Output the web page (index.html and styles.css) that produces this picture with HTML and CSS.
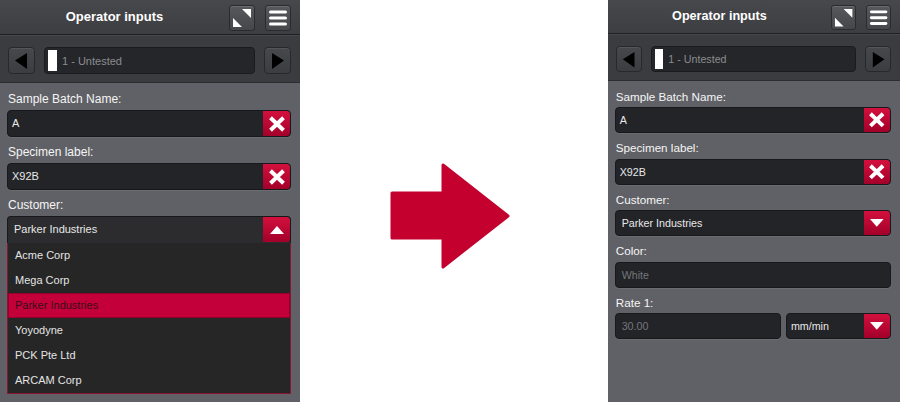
FILE: index.html
```html
<!DOCTYPE html>
<html lang="en">
<head>
<meta charset="utf-8">
<title>Operator inputs</title>
<link rel="stylesheet" href="styles.css">
</head>
<body>
<div class="page">
  <section class="panel">
    <header class="bar">
      <h1 class="title">Operator inputs</h1>
      <div class="bar-actions">
        <button class="tool-btn" aria-label="Expand"><svg viewBox="0 0 24 24"><polygon points="12,3 21,3 21,12" fill="#fff"/><polygon points="3,12 3,21 12,21" fill="#fff"/></svg></button>
        <button class="tool-btn" aria-label="Menu"><svg viewBox="0 0 24 24"><rect x="3" y="4.5" width="18" height="3" rx="1.5" fill="#fff"/><rect x="3" y="10.5" width="18" height="3" rx="1.5" fill="#fff"/><rect x="3" y="16.5" width="18" height="3" rx="1.5" fill="#fff"/></svg></button>
      </div>
    </header>
    <nav class="stepper">
      <button class="step-btn" aria-label="Previous"><svg viewBox="0 0 25 25"><polygon points="6,12.5 18,5 18,21" fill="#000"/></svg></button>
      <div class="step-field"><span class="swatch"></span><span class="step-text">1 - Untested</span></div>
      <button class="step-btn" aria-label="Next"><svg viewBox="0 0 25 25"><polygon points="19,12.5 7,5 7,21" fill="#000"/></svg></button>
    </nav>
    <div class="form">
      <div class="field">
        <label class="field-label">Sample Batch Name:</label>
        <div class="input"><span class="input-text">A</span><span class="red-btn"><svg class="icon-x" viewBox="0 0 18 16"><path d="M2.5 1.8L15.5 14.2M15.5 1.8L2.5 14.2" stroke="#fff" stroke-width="4"/></svg></span></div>
      </div>
      <div class="field">
        <label class="field-label">Specimen label:</label>
        <div class="input"><span class="input-text">X92B</span><span class="red-btn"><svg class="icon-x" viewBox="0 0 18 16"><path d="M2.5 1.8L15.5 14.2M15.5 1.8L2.5 14.2" stroke="#fff" stroke-width="4"/></svg></span></div>
      </div>
      <div class="field">
        <label class="field-label">Customer:</label>
        <div class="input select is-open"><span class="input-text select-text">Parker Industries</span><span class="red-btn"><svg class="icon-tri" viewBox="0 0 14 8"><polygon points="0,8 7,0 14,8" fill="#fff"/></svg></span></div>
        <ul class="options">
          <li class="option">Acme Corp</li>
          <li class="option">Mega Corp</li>
          <li class="option is-selected">Parker Industries</li>
          <li class="option">Yoyodyne</li>
          <li class="option">PCK Pte Ltd</li>
          <li class="option">ARCAM Corp</li>
        </ul>
      </div>
    </div>
  </section>

  <div class="divider">
    <svg class="big-arrow" viewBox="0 0 120 106" width="120" height="106"><polygon points="2,30 53,30 53,2 118,53 53,104 53,75 2,75" fill="#c4002e" stroke="#c4002e" stroke-width="3" stroke-linejoin="round"/></svg>
  </div>

  <section class="panel panel--compact">
    <header class="bar">
      <h1 class="title">Operator inputs</h1>
      <div class="bar-actions">
        <button class="tool-btn" aria-label="Expand"><svg viewBox="0 0 24 24"><polygon points="12,3 21,3 21,12" fill="#fff"/><polygon points="3,12 3,21 12,21" fill="#fff"/></svg></button>
        <button class="tool-btn" aria-label="Menu"><svg viewBox="0 0 24 24"><rect x="3" y="4.5" width="18" height="3" rx="1.5" fill="#fff"/><rect x="3" y="10.5" width="18" height="3" rx="1.5" fill="#fff"/><rect x="3" y="16.5" width="18" height="3" rx="1.5" fill="#fff"/></svg></button>
      </div>
    </header>
    <nav class="stepper">
      <button class="step-btn" aria-label="Previous"><svg viewBox="0 0 25 25"><polygon points="6,12.5 18,5 18,21" fill="#000"/></svg></button>
      <div class="step-field"><span class="swatch"></span><span class="step-text">1 - Untested</span></div>
      <button class="step-btn" aria-label="Next"><svg viewBox="0 0 25 25"><polygon points="19,12.5 7,5 7,21" fill="#000"/></svg></button>
    </nav>
    <div class="form">
      <div class="field">
        <label class="field-label">Sample Batch Name:</label>
        <div class="input"><span class="input-text">A</span><span class="red-btn"><svg class="icon-x" viewBox="0 0 18 16"><path d="M2.5 1.8L15.5 14.2M15.5 1.8L2.5 14.2" stroke="#fff" stroke-width="4"/></svg></span></div>
      </div>
      <div class="field">
        <label class="field-label">Specimen label:</label>
        <div class="input"><span class="input-text">X92B</span><span class="red-btn"><svg class="icon-x" viewBox="0 0 18 16"><path d="M2.5 1.8L15.5 14.2M15.5 1.8L2.5 14.2" stroke="#fff" stroke-width="4"/></svg></span></div>
      </div>
      <div class="field">
        <label class="field-label">Customer:</label>
        <div class="input select"><span class="input-text select-text">Parker Industries</span><span class="red-btn"><svg class="icon-tri" viewBox="0 0 14 8"><polygon points="0,0 14,0 7,8" fill="#fff"/></svg></span></div>
      </div>
      <div class="field">
        <label class="field-label">Color:</label>
        <div class="input"><span class="input-text placeholder">White</span></div>
      </div>
      <div class="field">
        <label class="field-label">Rate 1:</label>
        <div class="rate-row">
          <div class="input"><span class="input-text placeholder">30.00</span></div>
          <div class="input select"><span class="input-text">mm/min</span><span class="red-btn"><svg class="icon-tri" viewBox="0 0 14 8"><polygon points="0,0 14,0 7,8" fill="#fff"/></svg></span></div>
        </div>
      </div>
    </div>
  </section>
</div>
</body>
</html>
```

FILE: styles.css
```css
* {
  box-sizing: border-box;
  margin: 0;
  padding: 0;
}

html,
body {
  width: 900px;
  height: 402px;
  overflow: hidden;
  background: #ffffff;
}

body {
  font-family: "Liberation Sans", Arial, sans-serif;
}

.page {
  display: flex;
  height: 402px;
  overflow: hidden;
}

.panel {
  flex: none;
  width: 300px;
  height: 402px;
  background: #606166;
  display: flex;
  flex-direction: column;
}

.panel--compact {
  zoom: 0.973;
  height: 414px;
}

/* header bar */
.bar {
  height: 35px;
  flex: none;
  display: flex;
  align-items: flex-start;
  padding: 5px 9px 0 0;
  background: linear-gradient(#47484c, #3d3e42);
  border-bottom: 1px solid #1f2023;
}

.title {
  flex: 1;
  text-align: center;
  font-size: 13px;
  font-weight: bold;
  line-height: 24px;
  color: #ffffff;
}

.bar-actions {
  display: flex;
  gap: 10px;
}

.tool-btn {
  width: 26px;
  height: 26px;
  padding: 0;
  border: 1px solid #2a2b2f;
  border-radius: 3px;
  background: linear-gradient(#57585c, #46474b);
  box-shadow: inset 0 1px 0 rgba(255, 255, 255, 0.12);
  display: flex;
}

.tool-btn svg {
  width: 24px;
  height: 24px;
  display: block;
}

/* stepper */
.stepper {
  height: 48px;
  flex: none;
  display: flex;
  gap: 9px;
  padding: 11px 9px 0 8px;
  background: #3b3c40;
  border-top: 1px solid #46474b;
  border-bottom: 1px solid #2c2d31;
}

.step-btn {
  width: 27px;
  height: 27px;
  padding: 0;
  border: 1px solid #27282b;
  border-radius: 4px;
  background: linear-gradient(#47484c, #3c3d41);
  box-shadow: inset 0 1px 0 rgba(255, 255, 255, 0.08);
  display: flex;
}

.step-btn svg {
  width: 25px;
  height: 25px;
  display: block;
}

.step-field {
  flex: 1;
  height: 27px;
  display: flex;
  align-items: center;
  padding-left: 3px;
  background: #25262a;
  border: 1px solid #1a1b1e;
  border-radius: 4px;
}

.swatch {
  width: 9px;
  height: 21px;
  background: #ffffff;
}

.step-text {
  margin-left: 5px;
  font-size: 11px;
  color: #8b8c90;
}

/* form */
.form {
  padding: 9px 9px 0 7px;
}

.field {
  margin-bottom: 8px;
}

.field-label {
  display: block;
  padding-left: 1px;
  margin-bottom: 3px;
  font-size: 12px;
  line-height: 15px;
  color: #f5f5f5;
}

.input {
  height: 27px;
  display: flex;
  background: #232428;
  border: 1px solid #17181b;
  border-radius: 4px;
  box-shadow: 0 1px 0 rgba(255, 255, 255, 0.07);
  overflow: hidden;
}

.input-text {
  flex: 1;
  padding-left: 4px;
  font-size: 11px;
  line-height: 25px;
  color: #e8e8e8;
  white-space: nowrap;
}

.select-text {
  padding-left: 6px;
}

.placeholder {
  color: #75767a;
  padding-left: 6px;
}

.red-btn {
  width: 27px;
  flex: none;
  display: flex;
  align-items: center;
  justify-content: center;
  background: linear-gradient(#d3103d, #a2002a);
  border-radius: 0 3px 3px 0;
}

.icon-x {
  width: 18px;
  height: 16px;
  display: block;
}

.icon-tri {
  width: 14px;
  height: 8px;
  display: block;
}

.select.is-open {
  background: #2c2c2f;
  border-radius: 4px 4px 0 0;
  border-bottom-color: #2c2c2f;
}

.options {
  list-style: none;
  background: #262627;
  border: 1px solid #8b1530;
  border-top: none;
}

.option {
  height: 25px;
  line-height: 25px;
  padding-left: 7px;
  font-size: 11px;
  color: #e4e4e4;
}

.option.is-selected {
  background: #c4003a;
  color: #3a0c17;
  box-shadow: inset 0 0 0 1px #95002b;
}

.rate-row {
  display: grid;
  grid-template-columns: 171px 1fr;
  gap: 5px;
}

/* middle arrow */
.divider {
  flex: none;
  width: 308px;
  padding: 163px 0 0 90px;
}

.big-arrow {
  display: block;
}
```
